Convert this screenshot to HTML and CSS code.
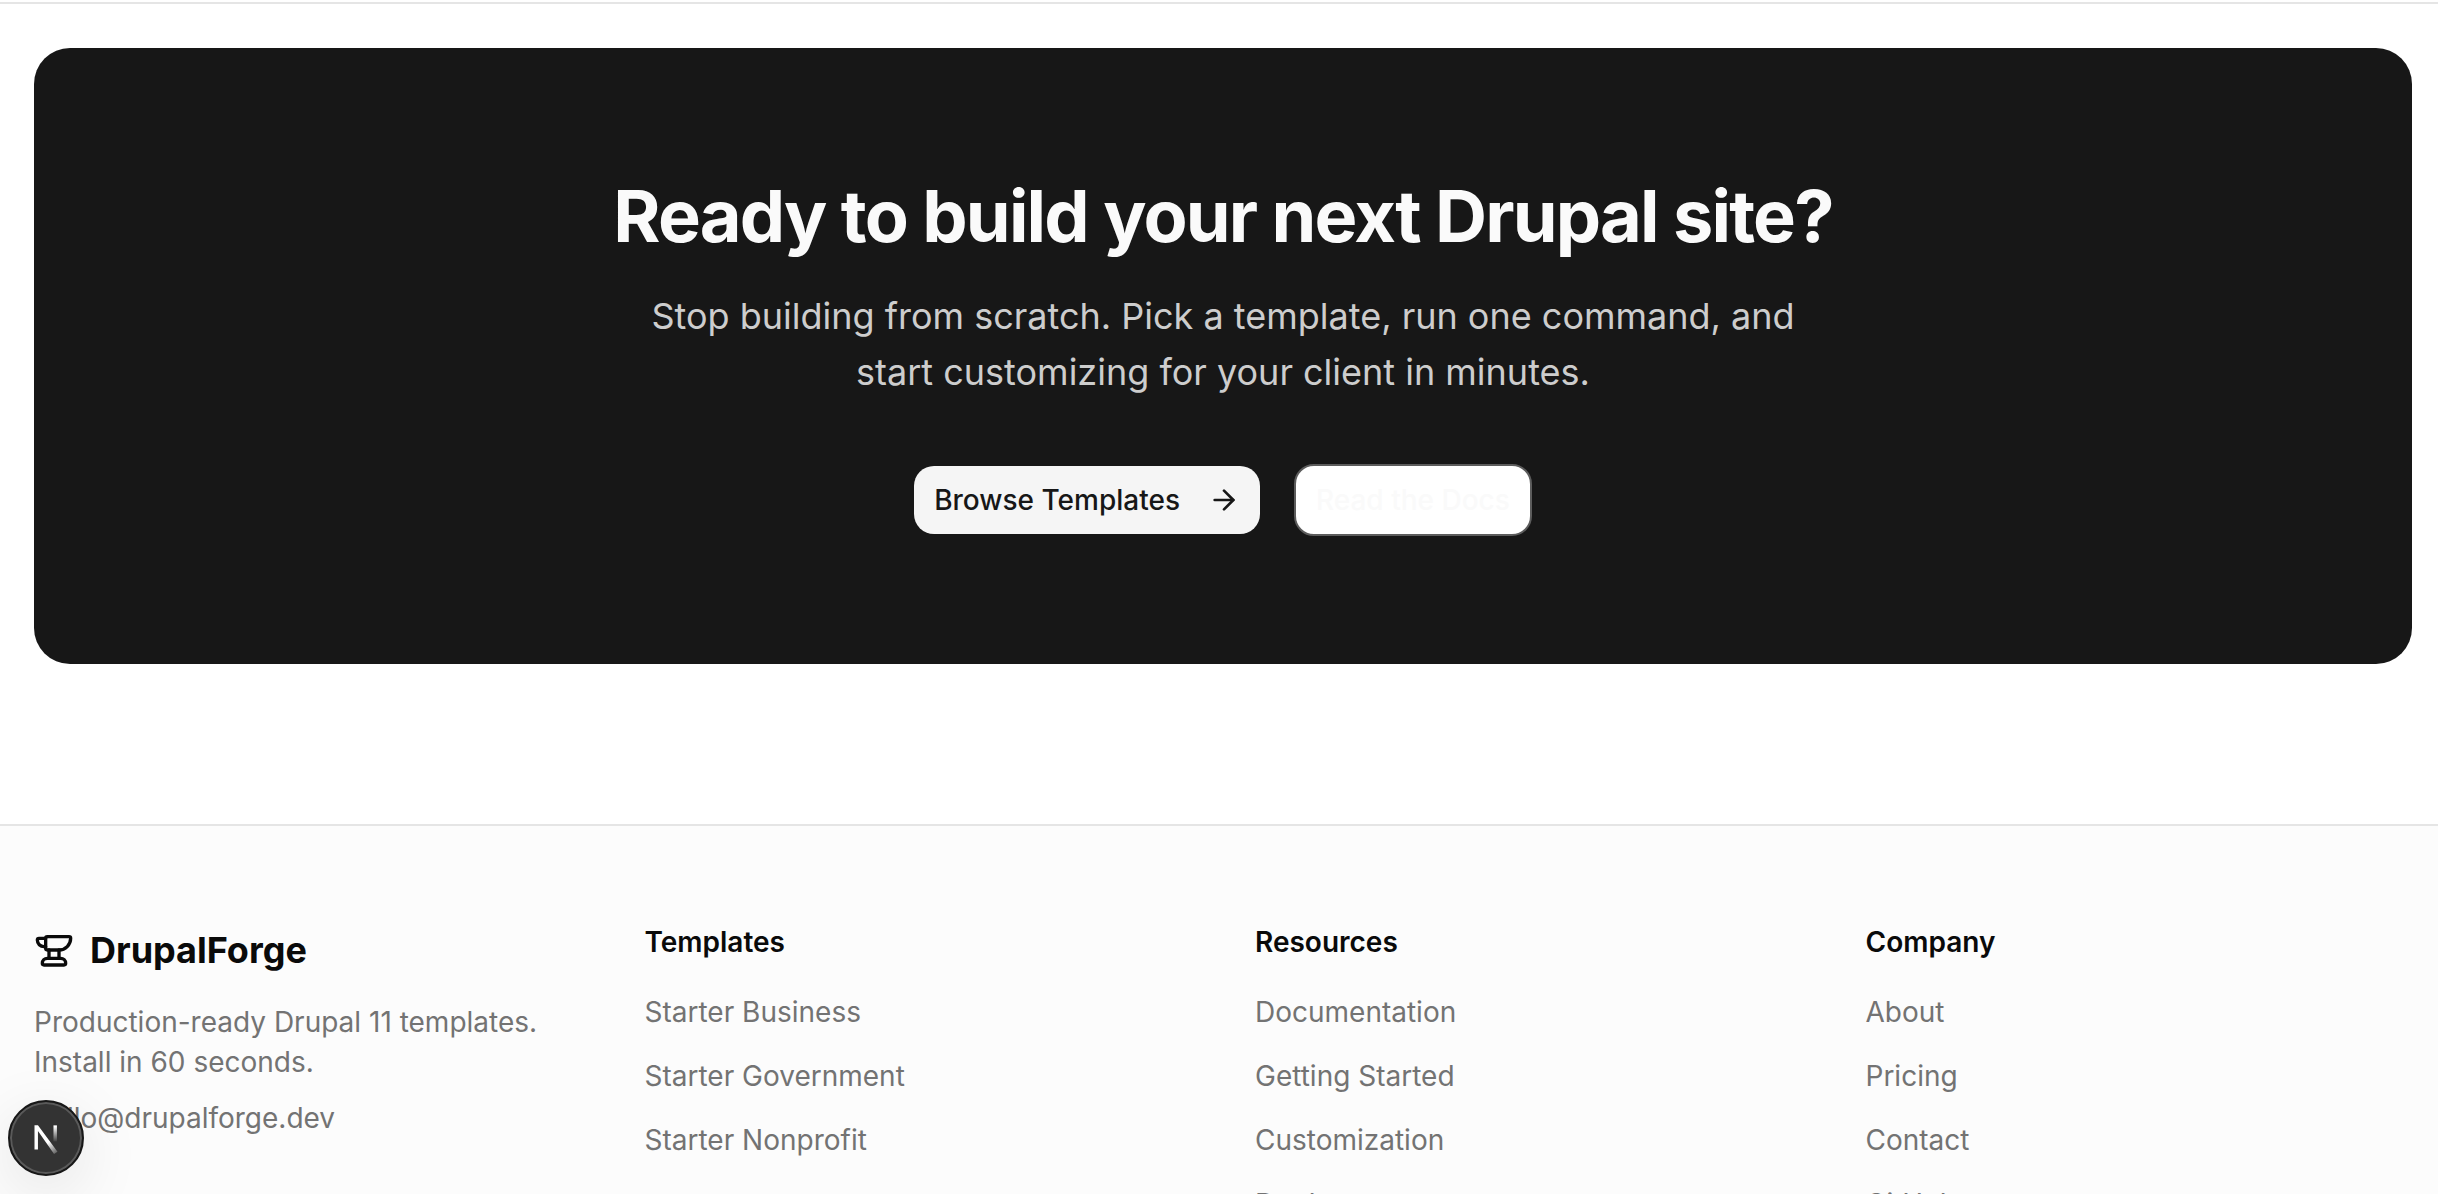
FILE: index.html
```
<!DOCTYPE html>
<html lang="en">
  <head>
    <meta charset="UTF-8" />
    <meta name="viewport" content="width=device-width, initial-scale=1.0" />
    <title>DrupalForge</title>
    <link rel="stylesheet" href="styles.css" />
  </head>
  <body>
    <main class="main">
      <section class="cta">
        <h2>Ready to build your next Drupal site?</h2>
        <p>Stop building from scratch. Pick a template, run one command, and start customizing for your client in minutes.</p>
        <div class="cta-buttons">
          <button type="button" class="btn btn-secondary">
            Browse Templates
            <svg class="icon" viewBox="0 0 24 24" aria-hidden="true">
              <path d="M5 12h14" />
              <path d="m12 5 7 7-7 7" />
            </svg>
          </button>
          <button type="button" class="btn btn-outline">Read the Docs</button>
        </div>
      </section>
    </main>

    <footer class="footer">
      <div class="footer-grid">
        <div class="footer-brand">
          <a href="#" class="logo">
            <svg class="icon" viewBox="0 0 24 24" aria-hidden="true">
              <path d="M7 10H6a4 4 0 0 1-4-4 1 1 0 0 1 1-1h4" />
              <path d="M7 5a1 1 0 0 1 1-1h13a1 1 0 0 1 1 1 7 7 0 0 1-7 7H8a1 1 0 0 1-1-1z" />
              <path d="M9 12v5" />
              <path d="M15 12v5" />
              <path d="M5 20a3 3 0 0 1 3-3h8a3 3 0 0 1 3 3 1 1 0 0 1-1 1H6a1 1 0 0 1-1-1" />
            </svg>
            DrupalForge
          </a>
          <p>Production-ready Drupal 11 templates. Install in 60 seconds.</p>
          <a href="#" class="email">hello@drupalforge.dev</a>
        </div>
        <div class="footer-column">
          <h3>Templates</h3>
          <ul>
            <li><a href="#">Starter Business</a></li>
            <li><a href="#">Starter Government</a></li>
            <li><a href="#">Starter Nonprofit</a></li>
          </ul>
        </div>
        <div class="footer-column">
          <h3>Resources</h3>
          <ul>
            <li><a href="#">Documentation</a></li>
            <li><a href="#">Getting Started</a></li>
            <li><a href="#">Customization</a></li>
            <li><a href="#">Deployment</a></li>
          </ul>
        </div>
        <div class="footer-column">
          <h3>Company</h3>
          <ul>
            <li><a href="#">About</a></li>
            <li><a href="#">Pricing</a></li>
            <li><a href="#">Contact</a></li>
            <li><a href="#">GitHub</a></li>
          </ul>
        </div>
      </div>
    </footer>

    <button type="button" class="dev-badge" aria-label="Open Next.js Dev Tools">
      <svg viewBox="0 0 40 40" fill="none" aria-hidden="true">
        <defs>
          <linearGradient id="fade-diagonal" x1="23" y1="23" x2="31" y2="34" gradientUnits="userSpaceOnUse">
            <stop stop-color="#fff" />
            <stop offset="1" stop-color="#fff" stop-opacity="0.1" />
          </linearGradient>
          <linearGradient id="fade-stem" x1="28" y1="10" x2="28" y2="24" gradientUnits="userSpaceOnUse">
            <stop stop-color="#fff" />
            <stop offset="1" stop-color="#fff" stop-opacity="0" />
          </linearGradient>
        </defs>
        <path d="M10 30V9h3l17 23-3 2L13 14v16z" fill="url(#fade-diagonal)" />
        <path d="M28 9v14" stroke="url(#fade-stem)" stroke-width="3" />
      </svg>
    </button>
  </body>
</html>
```
FILE: styles.css
```
* {
  box-sizing: border-box;
  margin: 0;
  padding: 0;
}

html {
  overflow: hidden;
}

body {
  height: 100vh;
  overflow: hidden;
  font-family: Inter, "Liberation Sans", sans-serif;
  font-size: 28px;
  line-height: 40px;
  color: #0a0a0a;
  background-color: #fff;
}

a {
  color: inherit;
  text-decoration: none;
}

ul {
  list-style: none;
}

.icon {
  width: 32px;
  height: 32px;
  fill: none;
  stroke: currentColor;
  stroke-width: 2;
  stroke-linecap: round;
  stroke-linejoin: round;
}

.main {
  margin-top: 2px;
  padding: 44px 26px 160px 34px;
  border-top: 2px solid #e5e5e5;
}

/* Call to action */
.cta {
  display: flex;
  flex-direction: column;
  align-items: center;
  padding: 128px 64px;
  border-radius: 36px;
  text-align: center;
  color: #fafafa;
  background-color: #171717;
}

.cta h2 {
  font-size: 72px;
  font-weight: 700;
  line-height: 80px;
  letter-spacing: -0.025em;
}

.cta p {
  max-width: 1152px;
  margin-top: 32px;
  font-size: 36px;
  line-height: 56px;
  color: #cdcdcd;
}

.cta-buttons {
  display: flex;
  align-items: center;
  gap: 34px;
  margin-top: 64px;
}

.btn {
  display: flex;
  align-items: center;
  height: 68px;
  padding: 0 20px;
  border: none;
  border-radius: 20px;
  font: inherit;
  font-weight: 500;
}

.btn .icon {
  margin-left: 28px;
}

.btn-secondary {
  color: #171717;
  background-color: #f5f5f5;
}

.btn-outline {
  height: 72px;
  border: 2px solid #5c5c5c;
  color: #fafafa;
  background-color: #fff;
}

/* Footer */
.footer {
  padding: 96px 26px 96px 34px;
  border-top: 2px solid #e5e5e5;
  background-color: #fcfcfc;
}

.footer-grid {
  display: grid;
  grid-template-columns: repeat(4, 1fr);
  gap: 64px;
}

.footer-brand {
  color: #737373;
}

.logo {
  display: flex;
  align-items: center;
  gap: 16px;
  font-size: 36px;
  font-weight: 700;
  line-height: 56px;
  color: #0a0a0a;
}

.logo .icon {
  width: 40px;
  height: 40px;
}

.footer-brand p {
  margin: 24px 0 16px;
}

.footer-column h3 {
  margin-bottom: 30px;
  font-size: 28px;
  font-weight: 600;
}

.footer-column li {
  margin-bottom: 24px;
  color: #737373;
}

/* Dev tools badge */
.dev-badge {
  position: fixed;
  bottom: 18px;
  left: 8px;
  display: flex;
  align-items: center;
  justify-content: center;
  width: 76px;
  height: 76px;
  border: 2px solid #171717;
  border-radius: 50%;
  background-color: #333;
  box-shadow: inset 0 0 0 2px #5a5a5a, 0 16px 64px rgba(0, 0, 0, 0.1);
}

.dev-badge svg {
  width: 46px;
  height: 46px;
}
```
